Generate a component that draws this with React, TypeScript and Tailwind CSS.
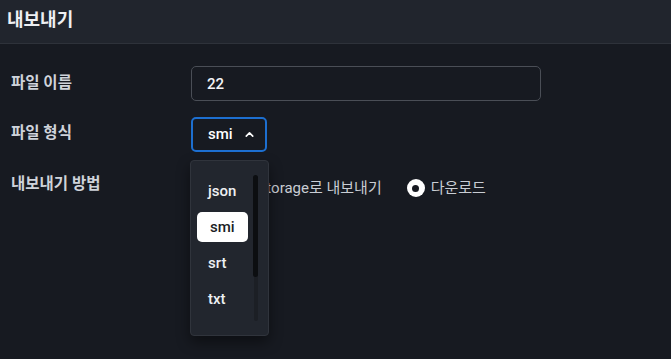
import { ChevronUp } from "lucide-react"

const FORMATS = ["json", "smi", "srt", "txt"]

const App = () => {
  const selected = "smi"

  return (
    <div
      className="w-[671px] h-[359px] overflow-hidden bg-[#171a21] text-white"
      style={{ fontFamily: 'Roboto, "Noto Sans CJK KR", sans-serif' }}
    >
      {/* 헤더 */}
      <div className="h-[44px] bg-[#21252d] border-b border-[#2e323a] flex items-center px-[7px]">
        <h1 className="text-[18px] font-bold text-[#eef0f3] -mt-[4px]">내보내기</h1>
      </div>

      <div className="pt-[22px] px-[11px] flex flex-col gap-[16px]">
        {/* 파일 이름 */}
        <div className="grid grid-cols-[180px_1fr]">
          <span className="pt-[7px] leading-5 text-[15.5px] font-semibold text-[#cfd3da]">파일 이름</span>
          <div className="w-[350px] h-[35px] border border-[#4a4e56] rounded-[5px] flex items-center px-[15px] pt-[2px] text-[15px] font-medium text-[#f3f4f6]">
            22
          </div>
        </div>

        {/* 파일 형식 */}
        <div className="grid grid-cols-[180px_1fr]">
          <span className="pt-[6px] leading-5 text-[15.5px] font-semibold text-[#cfd3da]">파일 형식</span>
          <div className="relative w-[76px]">
            <div className="h-[35px] border-2 border-[#1d6fd0] rounded-[5px] flex items-center pl-[15px] pr-[9px] justify-between text-[15px] font-medium">
              <span>{selected}</span>
              <ChevronUp className="size-[13px]" strokeWidth={3} />
            </div>

            {/* 드롭다운 */}
            <div className="absolute z-10 top-[43px] -left-[1px] w-[79px] h-[176px] bg-[#22262e] border border-[#30343c] rounded-[4px] shadow-[0_6px_14px_rgba(0,0,0,0.45)]">
              <ul className="flex flex-col gap-[6px] pt-[15px] pl-[6px] w-[57px]">
                {FORMATS.map((format) => (
                  <li
                    key={format}
                    className={
                      format === selected
                        ? "h-[30px] flex items-center pl-[13px] rounded-[5px] bg-white text-[#1b1e24] text-[15px] font-medium"
                        : "h-[30px] flex items-center pl-[11px] text-[15px] font-medium text-[#eef0f3]"
                    }
                  >
                    {format}
                  </li>
                ))}
              </ul>
              <div className="absolute left-[63px] top-[15px] w-[4px] h-[145px] rounded-full bg-[#1c1f25]" />
              <div className="absolute left-[62px] top-[14px] w-[5px] h-[102px] rounded-full bg-[#0c0e11]" />
            </div>
          </div>
        </div>

        {/* 내보내기 방법 */}
        <div className="grid grid-cols-[180px_1fr]">
          <span className="pt-[6px] leading-5 text-[15.5px] font-semibold text-[#cfd3da]">내보내기 방법</span>
          <div className="h-[36px] mt-[2px] flex items-center gap-[25px] text-[15px] text-[#c9cdd4]">
            <label className="flex items-center gap-[6px]">
              <span className="size-[18px] rounded-full border-2 border-[#8a8f98]" />
              Cloud Storage로 내보내기
            </label>
            <label className="flex items-center gap-[6px]">
              <span className="size-[18px] rounded-full bg-white flex items-center justify-center">
                <span className="size-[7px] rounded-full bg-[#171a21]" />
              </span>
              다운로드
            </label>
          </div>
        </div>
      </div>
    </div>
  )
}

export default App
